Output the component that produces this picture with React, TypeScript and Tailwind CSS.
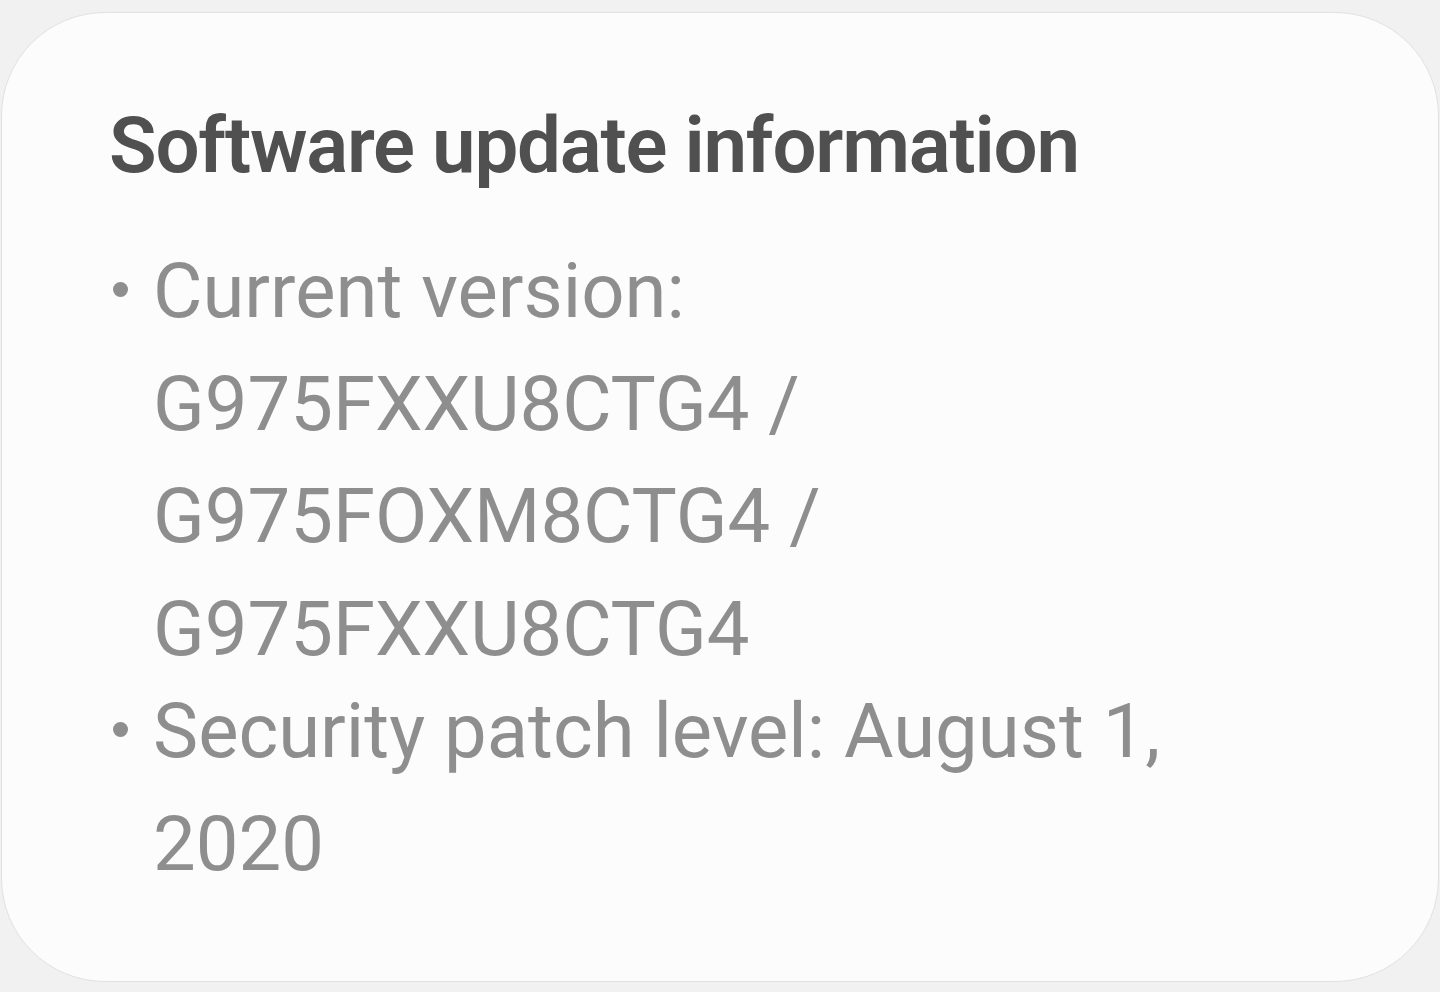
export default function App() {
  return (
    <div
      className="w-[1440px] h-[992px] bg-[#f1f1f1] pl-[1px] pr-[1px] pt-[12px]"
      style={{ fontFamily: 'Roboto, "Noto Sans", sans-serif' }}
    >
      <div className="h-[970px] rounded-[104px] border border-[#e1e1e1] bg-[#fcfcfc] pl-[107px] pt-[86px]">
        <h1 className="text-[78px] leading-[94px] font-semibold text-[#505050] tracking-[-1.2px]">
          Software update information
        </h1>
        <div className="mt-[42px] text-[76px] leading-[112.5px] text-[#8e8e8e]">
          <div className="flex">
            <div className="w-[44px] shrink-0 flex justify-start pt-[47px]">
              <span className="block w-[15px] h-[15px] rounded-full bg-[#8e8e8e] ml-[4px]" />
            </div>
            <div>
              <div>Current version:</div>
              <div>G975FXXU8CTG4 /</div>
              <div>G975FOXM8CTG4 /</div>
              <div>G975FXXU8CTG4</div>
            </div>
          </div>
          <div className="flex mt-[-10px]">
            <div className="w-[44px] shrink-0 flex justify-start pt-[47px]">
              <span className="block w-[15px] h-[15px] rounded-full bg-[#8e8e8e] ml-[4px]" />
            </div>
            <div>
              <div>Security patch level: August 1,</div>
              <div>2020</div>
            </div>
          </div>
        </div>
      </div>
    </div>
  );
}
